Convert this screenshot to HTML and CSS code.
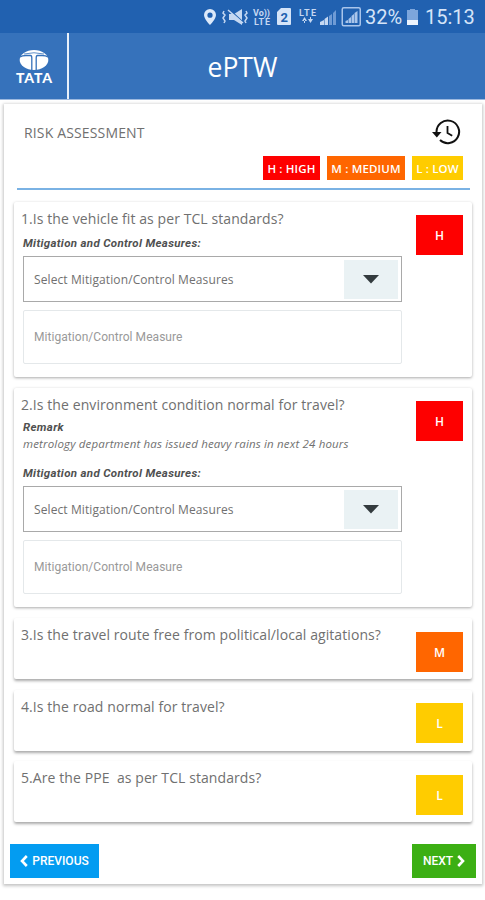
FILE: index.html
```
<!DOCTYPE html>
<html lang="en">
<head>
    <meta charset="utf-8">
    <title>ePTW</title>
    <link rel="stylesheet" href="styles.css">
</head>
<body>
    <div class="statusbar">
        <svg class="status-icons" width="160" height="34" viewBox="0 0 160 34">
            <!-- location -->
            <path fill="#dce9fa" fill-rule="evenodd" d="M8 9a6 6 0 0 0-6 6c0 4 6 10 6 10s6-6 6-10a6 6 0 0 0-6-6zm0 3.6a2.6 2.6 0 1 1 0 5.2 2.6 2.6 0 0 1 0-5.2z"/>
            <!-- vibrate / mute -->
            <path fill="#c5d8f2" d="M27 14h5l8-5v16l-8-5h-5z"/>
            <path fill="none" stroke="#2161b0" stroke-width="1.2" d="M28 10l14 13"/>
            <path fill="none" stroke="#c5d8f2" stroke-width="1.5" d="M26 10l15 13M22 11l-1 2 2 2-2 3 2 3-1 2M44 11l1 2-2 2 2 3-2 3 1 2"/>
            <text x="51" y="16" class="tiny" textLength="17">Vo))</text>
            <text x="52" y="25" class="tiny" textLength="16">LTE</text>
            <!-- sim 2 -->
            <path fill="#d5e4f8" d="M79 8h9q1 0 1 1v15q0 1-1 1H76q-1 0-1-1V12z"/>
            <text x="78.500" y="22" class="sim">2</text>
            <text x="97" y="16" class="tiny" textLength="17">LTE</text>
            <path fill="#c5d8f2" d="M100 21h5l-2.500-4zM106 19h5l-2.500 4zM102 20h1v3h-1zM108 17h1v3h-1z"/>
            <!-- signal -->
            <path fill="#c5d8f2" d="M118 25v-3l4-2v5zM122.500 25v-6l3.500-2.500v8.500z"/>
            <path fill="#6f9bd5" d="M127 25v-9l3-2v11zM131 25v-12l3-3v15z"/>
            <rect x="140.250" y="7.750" width="18" height="18" rx="1.500" fill="none" stroke="#a9c5eb" stroke-width="1.500"/>
            <path fill="#a9c5eb" d="M143.500 23v-2l2.500-1v3zM146.500 23v-4l2.500-2v6zM149.500 23v-7l2.500-2v9zM152.500 23v-10l3-2v12z"/>
        </svg>
        <span class="percent">32%</span>
        <svg class="battery" width="11" height="16" viewBox="0 0 11 16">
            <path fill="#7da6dc" d="M3 0h5v1h3v10H0V1h3z"/>
            <path fill="#edf4fd" d="M0 11h11v5H0z"/>
        </svg>
        <span class="clock">15:13</span>
    </div>

    <div class="header">
        <div class="logo">
            <svg width="30" height="20" viewBox="0 0 30 20">
                <ellipse cx="15" cy="10" rx="14.300" ry="10" fill="#fff"/>
                <path fill="none" stroke="#3672bb" stroke-width="1.300" d="M1 7Q3 5.500 7 5.500H11.500Q12.800 5.500 12.800 8V20M29 7Q27 5.500 23 5.500H18.500Q17.200 5.500 17.200 8V20"/>
                <path fill="none" stroke="#3672bb" stroke-width="0.800" d="M5 4Q15 1.500 25 4"/>
            </svg>
            <div class="brand">TATA</div>
        </div>
        <h1>ePTW</h1>
    </div>

    <div class="container">
        <div class="title-row">
            <h2>RISK ASSESSMENT</h2>
            <svg class="history" width="29" height="26" viewBox="0 0 29 26">
                <path fill="none" stroke="#111" stroke-width="2" d="M4.500 13A11.300 11.300 0 1 1 8 21"/>
                <path fill="#111" d="M0 13h9.500l-4.700 5.500z"/>
                <path fill="none" stroke="#111" stroke-width="1.800" d="M15.500 7v7l4.700 2.800"/>
            </svg>
        </div>
        <div class="legend">
            <span class="key high key-h">H : HIGH</span>
            <span class="key medium key-m">M : MEDIUM</span>
            <span class="key low key-l">L : LOW</span>
        </div>

        <div class="card card-1">
            <div class="question">
                <p class="q">1.Is the vehicle fit as per TCL standards?</p>
                <p class="label">Mitigation and Control Measures:</p>
                <div class="select">
                    <span>Select Mitigation/Control Measures</span>
                    <div class="arrow"><svg width="16" height="9" viewBox="0 0 16 9"><path fill="#333b3e" d="M0 0h16L8 8.500z"/></svg></div>
                </div>
                <div class="input">Mitigation/Control Measure</div>
            </div>
            <div class="badge high">H</div>
        </div>

        <div class="card card-2">
            <div class="question">
                <p class="q">2.Is the environment condition normal for travel?</p>
                <p class="label remark">Remark</p>
                <p class="note">metrology department has issued heavy rains in next 24 hours</p>
                <p class="label">Mitigation and Control Measures:</p>
                <div class="select">
                    <span>Select Mitigation/Control Measures</span>
                    <div class="arrow"><svg width="16" height="9" viewBox="0 0 16 9"><path fill="#333b3e" d="M0 0h16L8 8.500z"/></svg></div>
                </div>
                <div class="input">Mitigation/Control Measure</div>
            </div>
            <div class="badge high">H</div>
        </div>

        <div class="card small">
            <div class="question"><p class="q">3.Is the travel route free from political/local agitations?</p></div>
            <div class="badge medium">M</div>
        </div>
        <div class="card small">
            <div class="question"><p class="q">4.Is the road normal for travel?</p></div>
            <div class="badge low">L</div>
        </div>
        <div class="card small">
            <div class="question"><p class="q">5.Are the PPE&nbsp; as per TCL standards?</p></div>
            <div class="badge low">L</div>
        </div>

        <div class="buttons">
            <button class="previous">
                <svg width="8" height="12" viewBox="0 0 8 12"><path fill="none" stroke="#fff" stroke-width="2.600" d="M6.800 1L2 6l4.800 5"/></svg>
                <span>PREVIOUS</span>
            </button>
            <button class="next">
                <span>NEXT</span>
                <svg width="8" height="12" viewBox="0 0 8 12"><path fill="none" stroke="#fff" stroke-width="2.600" d="M1.200 1L6 6l-4.800 5"/></svg>
            </button>
        </div>
    </div>
</body>
</html>
```
FILE: styles.css
```
* {
    box-sizing: border-box;
}

body {
    margin: 0;
    height: 900px;
    overflow: hidden;
    background: #fff;
    font-family: "Open Sans", sans-serif;
    color: #707070;
}

h1, h2, p {
    margin: 0;
    font-weight: 400;
    white-space: nowrap;
}

.statusbar {
    display: flex;
    align-items: center;
    height: 33px;
    padding-left: 202px;
    background: #2161b0;
    color: #d5e4f8;
    font-family: Roboto, sans-serif;
    font-size: 20px;
    white-space: nowrap;
}

.status-icons {
    flex: none;
}

.tiny {
    font: bold 9px Roboto, sans-serif;
    fill: #c5d8f2;
}

.sim {
    font: bold 13px Roboto, sans-serif;
    fill: #2161b0;
}

.percent {
    width: 42px;
    padding-left: 3px;
}

.battery {
    flex: none;
    margin: 1px 7px 0 3px;
}

.header {
    display: flex;
    height: 67px;
    background: #3672bb;
    border-bottom: 1px solid #9db9df;
    color: #fff;
}

.logo {
    display: flex;
    flex-direction: column;
    align-items: center;
    width: 69px;
    padding-top: 17px;
    border-right: 2px solid #e8f0fa;
}

.brand {
    padding-left: 2px;
    font: 900 14px/16px Lato, sans-serif;
    letter-spacing: 0.9px;
}

h1 {
    flex: 1;
    padding-right: 69px;
    font-size: 26.500px;
    line-height: 68px;
    text-align: center;
}

.container {
    height: 780px;
    margin: 4px 3px 0 4px;
    padding: 0 10px;
    box-shadow: 0 1px 3px 1px #c4c4c4;
}

.title-row {
    display: flex;
    justify-content: space-between;
    height: 52px;
    padding: 15px 11px 0 10px;
}

h2 {
    font-size: 14px;
    line-height: 28px;
    letter-spacing: 0.15px;
}

.legend {
    display: flex;
    justify-content: flex-end;
    gap: 7px;
    height: 34px;
    margin: 0 2px 0 3px;
    padding-right: 7px;
    border-bottom: 2px solid #7ab2e4;
}

.key {
    height: 24px;
    color: #fff;
    font-size: 11.5px;
    font-weight: 600;
    line-height: 25px;
    letter-spacing: 0.15px;
    text-align: center;
    white-space: nowrap;
}

.key-h {
    width: 57px;
}

.key-m {
    width: 78px;
}

.key-l {
    width: 51px;
}

.high {
    background: #fe0000;
}

.medium {
    background: #ff6600;
}

.low {
    background: #ffcc00;
}

.card {
    display: flex;
    justify-content: space-between;
    width: 458px;
    margin-bottom: 11px;
    padding: 5px 9px 0 7px;
    border-radius: 2px;
    box-shadow: 0 1px 3px #aaa;
}

.card-1 {
    height: 175px;
    margin-top: 12px;
}

.card-2 {
    height: 219px;
}

.small {
    height: 61px;
    margin-bottom: 10.500px;
    box-shadow: 0 2px 3px #aaa;
}

.question {
    width: 382px;
}

.q {
    font-size: 14px;
    line-height: 24px;
    letter-spacing: 0.08px;
}

.label {
    padding-left: 2px;
    color: #505050;
    font: italic bold 11.500px/25px Roboto, sans-serif;
    letter-spacing: 0.33px;
}

.remark {
    line-height: 21px;
}

.note {
    height: 23px;
    padding-left: 2px;
    font-size: 11.500px;
    font-style: italic;
    line-height: 12px;
    letter-spacing: 0.16px;
}

.select {
    display: flex;
    align-items: center;
    justify-content: space-between;
    width: 379px;
    height: 46px;
    margin: 0 0 8px 2px;
    padding: 0 3px 0 10px;
    border: 1px solid #a9a9a9;
    font-size: 12px;
    letter-spacing: 0.1px;
}

.arrow {
    display: flex;
    align-items: center;
    justify-content: center;
    width: 54px;
    height: 39px;
    background: #eaf2f4;
}

.input {
    width: 379px;
    height: 54px;
    margin-left: 2px;
    padding-left: 10px;
    border: 1px solid #e4e8ea;
    border-radius: 2px;
    color: #999;
    font: 12px/53px Roboto, sans-serif;
    letter-spacing: 0.05px;
}

.badge {
    width: 47px;
    height: 40px;
    margin-top: 8px;
    color: #fff;
    font: 600 12px/42px "Open Sans", sans-serif;
    text-align: center;
}

.small .badge {
    margin-top: 8.500px;
}

.buttons {
    display: flex;
    justify-content: space-between;
    margin: 22px -4px 0;
}

button {
    display: flex;
    align-items: center;
    justify-content: center;
    gap: 4px;
    height: 34px;
    padding: 0;
    border: 0;
    color: #fff;
    font: 500 12px Roboto, sans-serif;
}

.previous {
    width: 89px;
    background: #039cf1;
}

.next {
    width: 64px;
    background: #3caf14;
}
```
